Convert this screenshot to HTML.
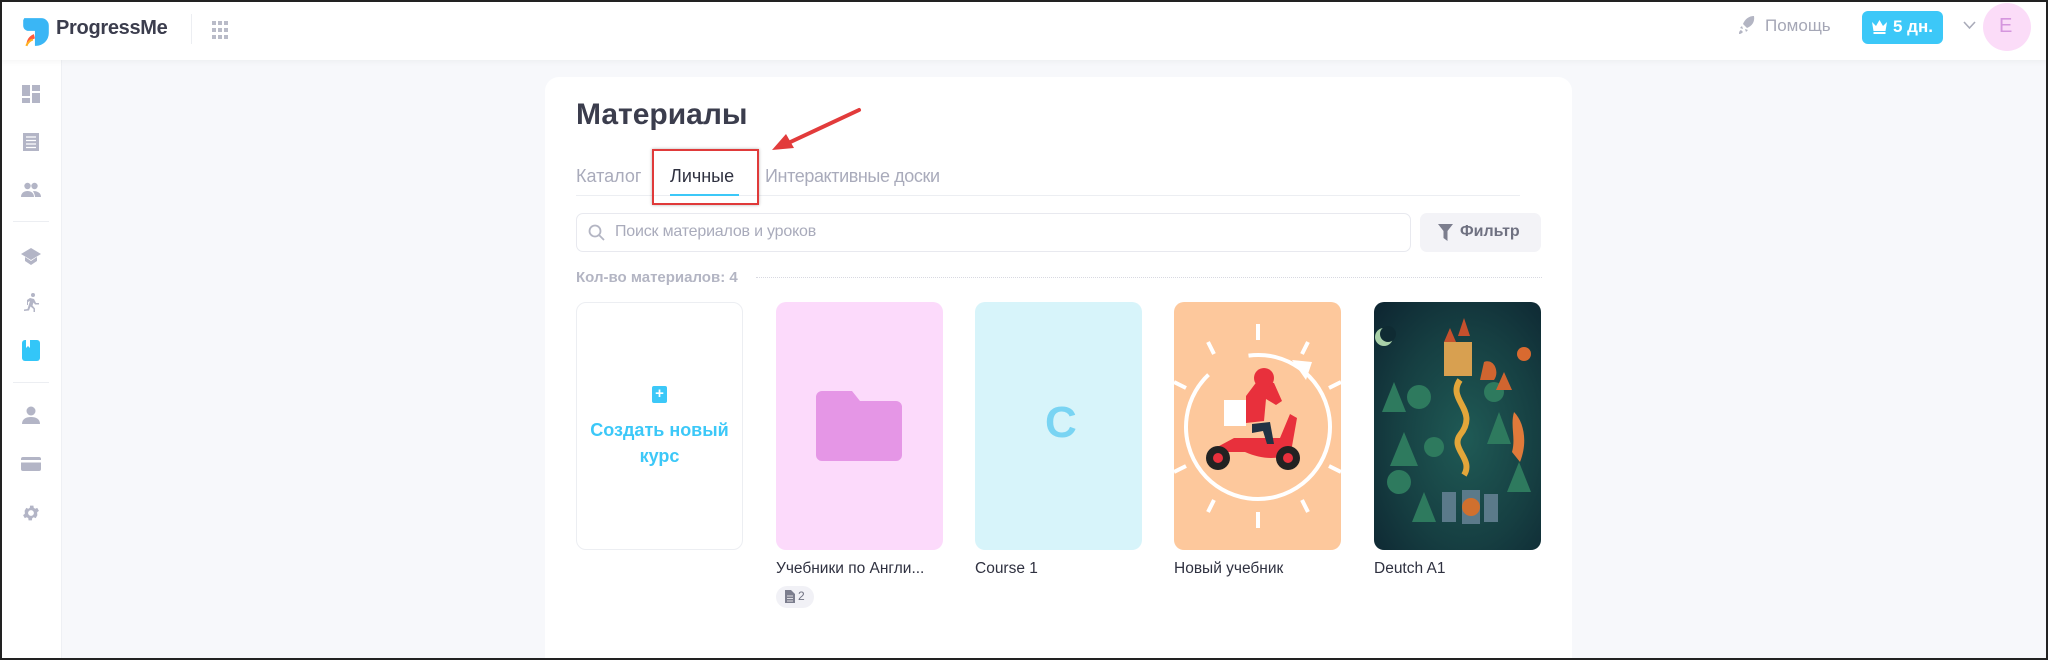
<!DOCTYPE html>
<html style="overflow:hidden;height:660px"><head><meta charset="utf-8"><style>
*{box-sizing:border-box;margin:0;padding:0}
body{width:2048px;height:660px;overflow:hidden;background:#f7f8fb;font-family:"Liberation Sans","DejaVu Sans",sans-serif;position:relative}
.frame{position:absolute;inset:0;border:2px solid #222;pointer-events:none;z-index:50}
.hdr{position:absolute;left:0;top:0;width:2048px;height:60px;background:#fff;box-shadow:0 2px 6px rgba(0,0,0,.04);z-index:5}
.side{position:absolute;left:0;top:60px;width:62px;height:600px;background:#fff;border-right:1px solid #eef0f4}
.ic{position:absolute;left:21px;width:20px;height:20px}
.card{position:absolute;left:545px;top:77px;width:1027px;height:583px;background:#fff;border-radius:14px 14px 0 0}
.t{position:absolute;white-space:nowrap}
.tile{position:absolute;top:302px;width:167px;height:248px;border-radius:10px;overflow:hidden}
.cap{position:absolute;top:560px;font-size:15.5px;color:#2f3140;white-space:nowrap}
</style></head><body>
<div class="frame"></div>
<div class="hdr">
 <svg style="position:absolute;left:20px;top:15px" width="32" height="34" viewBox="0 0 30 30"><path d="M4 2h16a7 7 0 0 1 7 7v7a12 12 0 0 1-12 12h-1V14H8a5 5 0 0 1-5-5V4z" fill="#3ab6f5"/><path d="M6 28c0-5 2-9 7-11l1 4c-3 1-5 4-8 7z" fill="#ff5a3c"/><path d="M6 28c1-3 3-5 6-6" stroke="#ffb020" stroke-width="2" fill="none"/></svg>
 <div class="t" style="left:56px;top:17px;font-size:20px;font-weight:bold;color:#3b3d4d;letter-spacing:-.3px">ProgressMe</div>
 <div style="position:absolute;left:191px;top:14px;width:1px;height:30px;background:#eceef2"></div>
 <svg style="position:absolute;left:212px;top:21px" width="16" height="18" viewBox="0 0 16 18" fill="#b9bbc8"><rect x="0" y="0" width="4" height="4"/><rect x="6" y="0" width="4" height="4"/><rect x="12" y="0" width="4" height="4"/><rect x="0" y="7" width="4" height="4"/><rect x="6" y="7" width="4" height="4"/><rect x="12" y="7" width="4" height="4"/><rect x="0" y="14" width="4" height="4"/><rect x="6" y="14" width="4" height="4"/><rect x="12" y="14" width="4" height="4"/></svg>
 <svg style="position:absolute;left:1738px;top:15px" width="18" height="20" viewBox="0 0 18 20"><path d="M16 1c-5 0-9 3-11 8l4 4c5-2 8-6 7-12zM4 11l-2 2 3 1zM7 14l1 3 2-2zM3 15c-2 1-2 3-2 4 2 0 3-1 4-2z" fill="#b3b5c3"/></svg>
 <div class="t" style="left:1765px;top:16px;font-size:17px;color:#a5a7b6">Помощь</div>
 <div style="position:absolute;left:1862px;top:11px;width:81px;height:33px;background:#3cc8f8;border-radius:6px"></div>
 <svg style="position:absolute;left:1871px;top:19px" width="17" height="15" viewBox="0 0 17 15"><path d="M1 3l4 4 3.5-6 3.5 6 4-4-1.5 9h-12zM2.5 13h12v2h-12z" fill="#fff"/></svg>
 <div class="t" style="left:1893px;top:17px;font-size:17px;font-weight:bold;color:#fff">5 дн.</div>
 <svg style="position:absolute;left:1963px;top:21px" width="13" height="9" viewBox="0 0 13 9"><path d="M1 1l5.5 6L12 1" stroke="#a9abb9" stroke-width="1.6" fill="none"/></svg>
 <div style="position:absolute;left:1983px;top:3px;width:48px;height:48px;border-radius:50%;background:#fbdcf8"></div>
 <div class="t" style="left:1999px;top:15px;font-size:20px;color:#d596de">E</div>
</div>
<div class="side">
 <svg class="ic" style="top:24px" viewBox="0 0 20 20" fill="#b3b5c6"><rect x="1" y="1" width="8" height="11"/><rect x="11" y="1" width="8" height="6"/><rect x="11" y="9" width="8" height="10"/><rect x="1" y="14" width="8" height="5"/></svg>
 <svg class="ic" style="top:72px" viewBox="0 0 20 20" fill="#b3b5c6"><path d="M2 1h16v18H2z"/><path d="M5 5h10M5 8.5h10M5 12h10M5 15.5h10" stroke="#fff" stroke-width="1.3"/></svg>
 <svg class="ic" style="top:120px" viewBox="0 0 20 20" fill="#b3b5c6"><circle cx="6.5" cy="6" r="3.2"/><circle cx="13.5" cy="6" r="3.2"/><path d="M0 17c0-4 3-6 6.5-6s6.5 2 6.5 6zM12 11c4 0 8 1.5 8 6h-6c0-2-1-4-2-6z"/></svg>
 <div style="position:absolute;left:13px;top:161px;width:36px;height:1px;background:#eceef2"></div>
 <svg class="ic" style="top:186px" viewBox="0 0 20 20" fill="#b3b5c6"><path d="M10 2L0 8l10 6 10-6zM4 11v4l6 4 6-4v-4l-6 4z"/></svg>
 <svg class="ic" style="top:232px" viewBox="0 0 20 20" fill="#b3b5c6"><circle cx="12" cy="3" r="2"/><path d="M9 6l4 1 2 4h3v1.5h-4l-1.5-2-1 3 2.5 3v4h-1.5v-3.5l-3-2.5-1.5 4-5 .5v-1.5l3.5-.5 2.5-8-2 1v3H6V8z"/></svg>
 <div style="position:absolute;left:22px;top:280px;width:18px;height:21px;background:#33c6f8;border-radius:3px"></div>
 <div style="position:absolute;left:26px;top:280px;width:4px;height:8px;background:#fff;clip-path:polygon(0 0,100% 0,100% 100%,50% 75%,0 100%)"></div>
 <div style="position:absolute;left:13px;top:322px;width:36px;height:1px;background:#eceef2"></div>
 <svg class="ic" style="top:345px" viewBox="0 0 20 20" fill="#b3b5c6"><circle cx="10" cy="6" r="4.5"/><path d="M1 19c0-5 4-7 9-7s9 2 9 7z"/></svg>
 <svg class="ic" style="top:394px" viewBox="0 0 20 20" fill="#b3b5c6"><rect x="0" y="3" width="20" height="14" rx="2"/><rect x="0" y="6" width="20" height="2.5" fill="#fff"/></svg>
 <svg class="ic" style="top:443px" viewBox="0 0 24 24" fill="#b3b5c6"><path d="M19.4 13a7.5 7.5 0 0 0 0-2l2.1-1.6-2-3.5-2.5 1a7 7 0 0 0-1.7-1l-.4-2.7h-4l-.4 2.7a7 7 0 0 0-1.7 1l-2.5-1-2 3.5L4.6 11a7.5 7.5 0 0 0 0 2l-2.1 1.6 2 3.5 2.5-1a7 7 0 0 0 1.7 1l.4 2.7h4l.4-2.7a7 7 0 0 0 1.7-1l2.5 1 2-3.5zM12 15.5a3.5 3.5 0 1 1 0-7 3.5 3.5 0 0 1 0 7z"/></svg>
</div>
<div class="card">
 <div class="t" style="left:31px;top:21px;font-size:30px;font-weight:bold;color:#3b3d4d">Материалы</div>
 <div style="position:absolute;left:31px;top:118px;width:944px;height:1px;background:#eceef2"></div>
 <div class="t" style="left:31px;top:89px;font-size:18px;color:#a9abbb">Каталог</div>
 <div class="t" style="left:125px;top:89px;font-size:18px;color:#2f3140">Личные</div>
 <div style="position:absolute;left:125px;top:117px;width:69px;height:2px;background:#3cc8f8"></div>
 <div class="t" style="left:220px;top:89px;font-size:18px;color:#a9abbb;letter-spacing:-.4px">Интерактивные доски</div>
 <div style="position:absolute;left:31px;top:136px;width:835px;height:39px;border:1px solid #e8e9ef;border-radius:7px"></div>
 <svg style="position:absolute;left:43px;top:147px" width="17" height="17" viewBox="0 0 17 17"><circle cx="7" cy="7" r="5.5" stroke="#b3b5c3" stroke-width="1.8" fill="none"/><path d="M11 11l5 5" stroke="#b3b5c3" stroke-width="1.8"/></svg>
 <div class="t" style="left:70px;top:146px;font-size:16px;color:#a9abbb;letter-spacing:-.2px">Поиск материалов и уроков</div>
 <div style="position:absolute;left:875px;top:136px;width:121px;height:39px;background:#f3f3f7;border-radius:7px"></div>
 <svg style="position:absolute;left:893px;top:147px" width="15" height="17" viewBox="0 0 15 17"><path d="M0 0h15l-5.5 7v10l-4-3V7z" fill="#7c7e8e"/></svg>
 <div class="t" style="left:915px;top:146px;font-size:16px;font-weight:bold;color:#6f7181">Фильтр</div>
 <div class="t" style="left:31px;top:192px;font-size:15px;font-weight:bold;color:#b3b5c3">Кол-во материалов: 4</div>
 <div style="position:absolute;left:211px;top:200px;width:786px;border-top:1px dotted #d8d9e1"></div>
</div>
<div style="position:absolute;left:652px;top:149px;width:107px;height:56px;border:2px solid #e03a3a;box-shadow:0 0 3px rgba(0,0,0,.3);z-index:6"></div>
<svg style="position:absolute;left:760px;top:100px;z-index:6" width="110" height="60" viewBox="0 0 110 60"><path d="M99 10L24 45" stroke="#e23b3b" stroke-width="4" stroke-linecap="round"/><path d="M12 50l22-2-8-14z" fill="#e23b3b"/></svg>
<div class="tile" style="left:576px;border:1px solid #eceef2;background:#fff"></div>
<div style="position:absolute;left:652px;top:386px;width:15px;height:17px;background:#3cc8f8;border-radius:2px;color:#fff;font-size:15px;line-height:16px;text-align:center;font-weight:bold">+</div>
<div class="t" style="left:576px;top:417px;width:167px;text-align:center;font-size:18px;font-weight:bold;color:#3cc8f8;line-height:26px;white-space:normal">Создать новый<br>курс</div>
<div class="tile" style="left:776px;background:#fcdafb"></div>
<svg style="position:absolute;left:816px;top:391px" width="86" height="70" viewBox="0 0 86 70"><path d="M0 6a6 6 0 0 1 6-6h30l8 10h36a6 6 0 0 1 6 6v48a6 6 0 0 1-6 6H6a6 6 0 0 1-6-6z" fill="#e596e6"/></svg>
<div class="tile" style="left:975px;background:#d7f4fa"></div>
<div class="t" style="left:1045px;top:398px;font-size:44px;font-weight:bold;color:#79d4f3">C</div>
<div class="tile" style="left:1174px;background:#fdc89c">
 <svg width="167" height="248" viewBox="0 0 167 248"><g stroke="#fff" stroke-width="4" fill="none"><circle cx="84" cy="125" r="72" stroke-dasharray="360 45" transform="rotate(-60 84 125)"/><path d="M84 22v16M84 210v16M34 40l6 12M128 198l6 12M134 40l-6 12M40 198l-6 12M0 80l12 6M155 164l12 6M167 80l-12 6M12 164l-12 6"/></g><path d="M118 58l20 2-6 18z" fill="#fff"/><path d="M34 150l26-14h46l10-24 7 4-6 34c-10 8-28 8-46 0z" fill="#e8303c"/><circle cx="44" cy="156" r="12" fill="#222"/><circle cx="44" cy="156" r="5" fill="#e8303c"/><circle cx="114" cy="156" r="12" fill="#222"/><circle cx="114" cy="156" r="5" fill="#e8303c"/><rect x="50" y="98" width="22" height="26" fill="#fff"/><path d="M72 94l12-16 16 3 8 18-6 4-10-6-2 22-18 2z" fill="#e8303c"/><circle cx="90" cy="76" r="10" fill="#e8303c"/><path d="M78 122l18-2 4 22h-7l-4-13-11 2z" fill="#234"/></svg>
</div>
<div class="tile" style="left:1374px;background:radial-gradient(ellipse at 55% 55%,#1f5a55 0%,#163f42 55%,#0d2430 100%)">
 <svg width="167" height="248" viewBox="0 0 167 248"><circle cx="10" cy="35" r="9" fill="#a8d0a8"/><circle cx="14" cy="32" r="8" fill="#0f2b33"/><circle cx="150" cy="52" r="7" fill="#d96a30"/><rect x="70" y="40" width="28" height="34" fill="#d8a050"/><path d="M70 40l6-14 6 14zM84 34l6-18 6 18z" fill="#c5502d"/><path d="M86 78c-14 20 20 30 0 55-10 14 14 24 4 40" stroke="#e3a63a" stroke-width="6" fill="none"/><g fill="#2e7a5e"><path d="M20 80l12 30H8zM30 130l14 34H16zM125 110l12 32h-24zM50 190l12 30H38zM145 160l12 30h-24z"/><circle cx="45" cy="95" r="12"/><circle cx="120" cy="90" r="10"/><circle cx="25" cy="180" r="12"/><circle cx="60" cy="145" r="10"/></g><path d="M110 60c10-4 16 10 10 18h-14zM130 70l8 18h-16z" fill="#d06530"/><path d="M140 110c10 10 14 30 6 50l-8-10c4-14-2-26 2-40z" fill="#e07a3a"/><g fill="#5b7a8a"><rect x="68" y="190" width="14" height="30"/><rect x="88" y="188" width="18" height="34"/><rect x="110" y="192" width="14" height="28"/></g><circle cx="97" cy="205" r="9" fill="#d0702e"/></svg>
</div>
<div class="cap" style="left:776px">Учебники по Англи...</div>
<div class="cap" style="left:975px">Course 1</div>
<div class="cap" style="left:1174px">Новый учебник</div>
<div class="cap" style="left:1374px">Deutch A1</div>
<div style="position:absolute;left:776px;top:586px;width:38px;height:22px;background:#f1f1f6;border-radius:11px"></div>
<svg style="position:absolute;left:785px;top:590px" width="10" height="13" viewBox="0 0 10 13"><path d="M0 0h6l4 4v9H0z" fill="#7c7e8e"/><path d="M2 6h6M2 8.5h6M2 11h6" stroke="#fff" stroke-width=".8"/></svg>
<div class="t" style="left:798px;top:589px;font-size:12px;color:#6f7181">2</div>
</body></html>
